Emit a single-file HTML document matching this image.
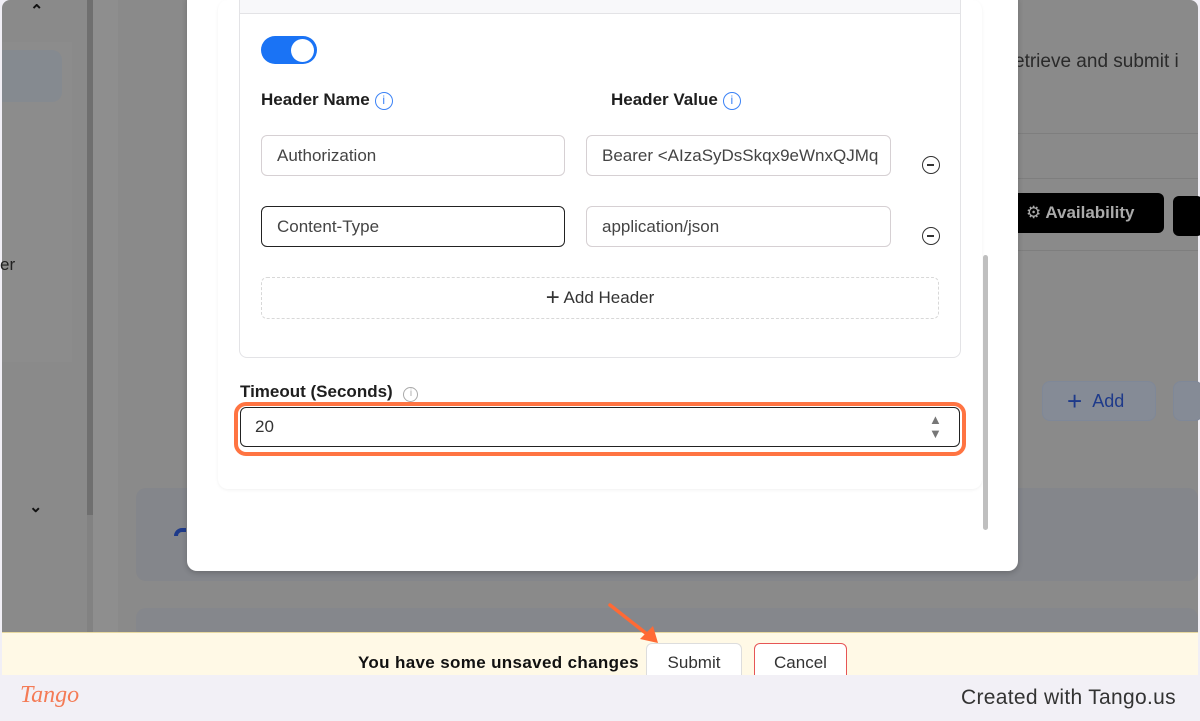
<!DOCTYPE html>
<html><head><meta charset="utf-8"><style>
*{box-sizing:border-box;margin:0;padding:0}
body{width:1200px;height:721px;overflow:hidden;background:#f1eff6;font-family:"Liberation Sans",sans-serif;position:relative}
.a{position:absolute}
.inp{position:absolute;height:41px;border:1px solid #d6d0d3;border-radius:6px;background:#fff;font-size:17px;color:#444;padding:0 0 0 15px;line-height:39px;white-space:nowrap;overflow:hidden}
.lbl{position:absolute;font-size:17px;font-weight:bold;color:#1e1e1e}
.info{display:inline-block;width:18px;height:18px;border:1.5px solid #3b82f6;border-radius:50%;color:#3b82f6;font-size:12px;text-align:center;line-height:15px;font-weight:normal;vertical-align:1px;margin-left:5px}
.minus{position:absolute;width:18px;height:18px;border:1.6px solid #333;border-radius:50%}
.minus:after{content:"";position:absolute;left:4px;top:7px;width:7px;height:1.6px;background:#333}
</style></head><body>
<div class="a" style="left:2px;top:0;width:1196px;height:632px;background:#8a8a8a;border-radius:8px 8px 0 0"></div>
<div class="a" style="left:2px;top:42px;width:70px;height:320px;background:#8c8c8c"></div>
<div class="a" style="left:2px;top:50px;width:60px;height:52px;background:#858a90;border-radius:0 10px 10px 0"></div>
<div class="a" style="left:87px;top:0;width:6px;height:515px;background:#6f6f6f"></div>
<div class="a" style="left:87px;top:515px;width:6px;height:117px;background:#828282"></div>
<div class="a" style="left:93px;top:0;width:25px;height:632px;background:#8e8e8e"></div>
<div class="a" style="left:136px;top:488px;width:1062px;height:93px;background:#84868b;border-radius:10px"></div>
<div class="a" style="left:136px;top:608px;width:1062px;height:30px;background:#85878c;border-radius:10px"></div>
<div class="a" style="left:30px;top:1px;font-size:16px;color:#111;font-weight:bold">&#8963;</div>
<div class="a" style="left:29px;top:497px;font-size:16px;color:#111;font-weight:bold">&#8964;</div>
<div class="a" style="left:0;top:255px;font-size:17px;color:#222">er</div>
<div class="a" style="left:174px;top:528px;width:12px;height:8px;border-top:4px solid #1e3a8a;border-left:4px solid #1e3a8a;border-radius:8px 0 0 0"></div>
<div class="a" style="left:1018px;top:133px;width:180px;height:1px;background:#7e7e7e"></div>
<div class="a" style="left:1018px;top:178px;width:180px;height:1px;background:#7e7e7e"></div>
<div class="a" style="left:1018px;top:250px;width:180px;height:1px;background:#7e7e7e"></div>
<div class="a" style="left:1014px;top:51px;font-size:19px;color:#2a2a2a">etrieve and submit i</div>
<div class="a" style="left:1018px;top:193px;width:146px;height:40px;background:#000;border-radius:0 6px 6px 0;color:#aaa;font-size:17px;font-weight:bold;line-height:40px;padding-left:8px"><span style="font-weight:normal">&#9881;</span> Availability</div>
<div class="a" style="left:1173px;top:196px;width:30px;height:40px;background:#000;border-radius:6px"></div>
<div class="a" style="left:1042px;top:381px;width:114px;height:40px;background:#858b96;border:1px solid #7f8898;border-radius:8px;color:#1e3a8a;font-size:18px;line-height:38px;padding-left:24px"><span style="font-size:26px;vertical-align:-3px">+</span>&nbsp;&nbsp;Add</div>
<div class="a" style="left:1173px;top:381px;width:30px;height:40px;background:#858b96;border:1px solid #7f8898;border-radius:8px"></div>
<div class="a" style="left:187px;top:-10px;width:831px;height:581px;background:#fff;border-radius:10px;box-shadow:0 2px 6px rgba(0,0,0,.2)"></div>
<div class="a" style="left:218px;top:0;width:764px;height:489px;border-radius:10px;box-shadow:0 1px 3px rgba(0,0,0,.06)"></div>
<div class="a" style="left:239px;top:-10px;width:722px;height:368px;border:1px solid #e3e3e6;border-radius:8px"></div>
<div class="a" style="left:240px;top:0;width:720px;height:14px;background:#f8f8fa;border-bottom:1px solid #e3e3e6"></div>
<div class="a" style="left:983px;top:255px;width:5px;height:275px;background:#bfbfbf;border-radius:3px"></div>
<div class="a" style="left:261px;top:36px;width:56px;height:28px;background:#1a73f5;border-radius:14px"></div>
<div class="a" style="left:291px;top:39px;width:23px;height:23px;background:#fff;border-radius:50%"></div>
<div class="lbl" style="left:261px;top:90px">Header Name<span class="info">i</span></div>
<div class="lbl" style="left:611px;top:90px">Header Value<span class="info">i</span></div>
<div class="inp" style="left:261px;top:135px;width:304px">Authorization</div>
<div class="inp" style="left:586px;top:135px;width:305px;padding-right:12px">Bearer &lt;AIzaSyDsSkqx9eWnxQJMq</div>
<div class="minus" style="left:922px;top:156px"></div>
<div class="inp" style="left:261px;top:206px;width:304px;border-color:#222">Content-Type</div>
<div class="inp" style="left:586px;top:206px;width:305px">application/json</div>
<div class="minus" style="left:922px;top:227px"></div>
<div class="a" style="left:261px;top:277px;width:678px;height:42px;border:1px dashed #d8d8d8;border-radius:6px;text-align:center;font-size:17px;color:#333;line-height:40px"><span style="font-size:24px;vertical-align:-2px">+</span> Add Header</div>
<div class="lbl" style="left:240px;top:382px">Timeout (Seconds) <span class="info" style="border-color:#aaa;color:#aaa;width:15px;height:15px;line-height:12px;font-size:10px;margin-left:6px">i</span></div>
<div class="a" style="left:234px;top:402px;width:732px;height:54px;border:4.5px solid #ff7442;border-radius:12px"></div>
<div class="a" style="left:240px;top:407px;width:720px;height:40px;border:1px solid #222;border-radius:6px;font-size:17px;color:#333;line-height:38px;padding-left:14px">20</div>
<div class="a" style="left:929px;top:413px;font-size:13px;color:#777;line-height:14px">&#9650;<br>&#9660;</div>
<div class="a" style="left:2px;top:632px;width:1196px;height:43px;background:#fff9e6;border-top:1px solid #e8d9a0"></div>
<div class="a" style="left:358px;top:653px;font-size:17px;font-weight:bold;color:#111;letter-spacing:0.35px">You have some unsaved changes</div>
<div class="a" style="left:646px;top:643px;width:96px;height:40px;background:#fff;border:1px solid #ddd;border-radius:6px;text-align:center;line-height:38px;font-size:17px;color:#333">Submit</div>
<div class="a" style="left:754px;top:643px;width:93px;height:40px;background:#fff;border:1px solid #e65555;border-radius:6px;text-align:center;line-height:38px;font-size:17px;color:#333">Cancel</div>
<svg class="a" style="left:600px;top:598px" width="70" height="50"><line x1="10" y1="7" x2="52" y2="40" stroke="#ff6a35" stroke-width="3.5" stroke-linecap="round"/><path d="M58 45 L40 41 L53 28 Z" fill="#ff6a35"/></svg>
<div class="a" style="left:0;top:675px;width:1200px;height:46px;background:#f2f0f6"></div>
<div class="a" style="left:20px;top:682px;font-family:'Liberation Serif',serif;font-style:italic;font-size:24px;color:#f47b56">Tango</div>
<div class="a" style="left:961px;top:686px;font-size:21px;color:#333;letter-spacing:0.3px">Created with Tango.us</div>
</body></html>
